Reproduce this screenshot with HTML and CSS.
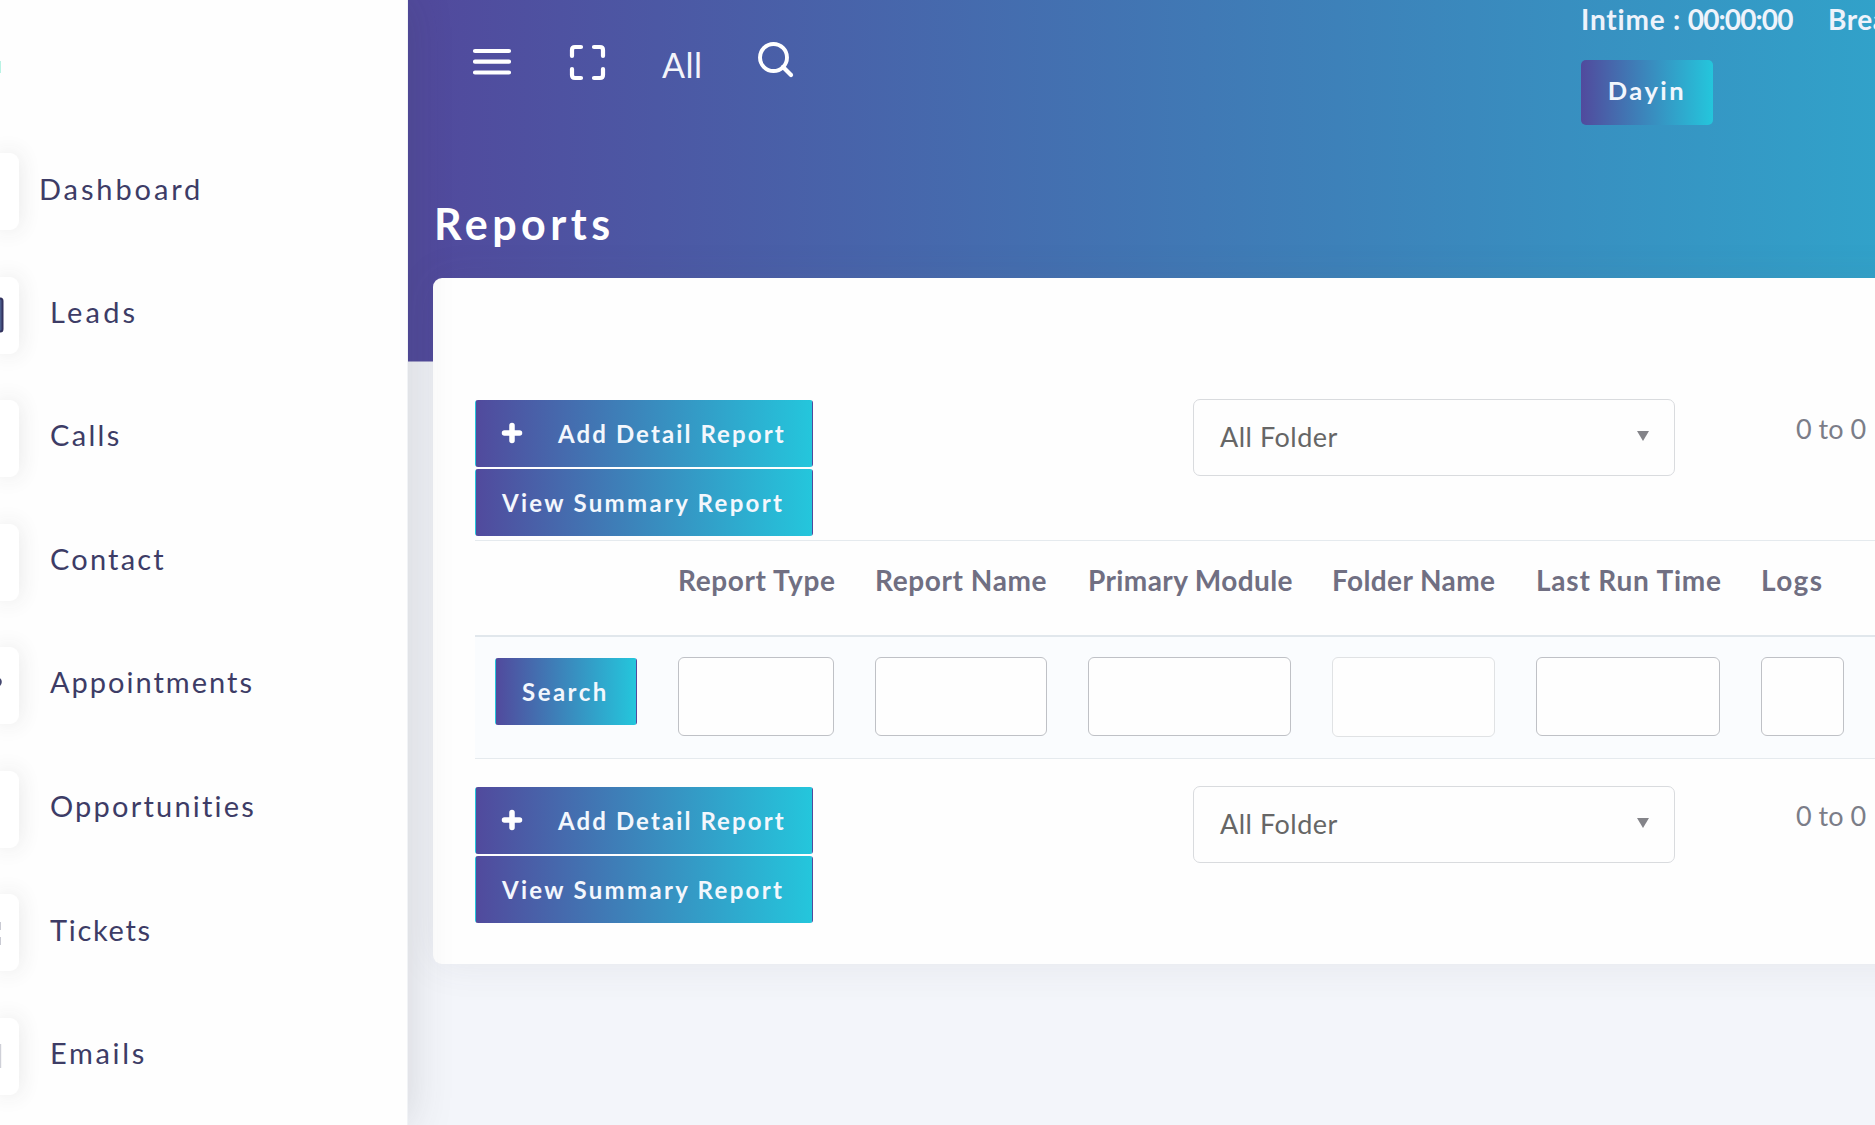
FILE: index.html
```html
<!DOCTYPE html>
<html lang="en">
<head>
<meta charset="utf-8">
<title>Reports</title>
<link rel="stylesheet" href="styles.css">
</head>
<body>
<div class="app">
  <aside class="sidebar">
    <div class="brand"><span class="brand-dot"></span></div>
    <nav class="nav">
      <a class="nav-item nav-item-home"><span class="nav-icon"></span><span class="nav-label t-dashboard">Dashboard</span></a>
      <a class="nav-item"><span class="nav-icon"><svg width="6" height="36" viewBox="0 0 6 36"><path d="M-6 1.5H.5Q2.5 1.5 2.5 4V32Q2.5 34.500 .5 34.500H-6Z" fill="#4b5c8c" stroke="#33335f" stroke-width="2"/></svg></span><span class="nav-label t-leads">Leads</span></a>
      <a class="nav-item"><span class="nav-icon"></span><span class="nav-label t-calls">Calls</span></a>
      <a class="nav-item"><span class="nav-icon"></span><span class="nav-label t-contact">Contact</span></a>
      <a class="nav-item"><span class="nav-icon"><svg width="6" height="18" viewBox="0 0 6 18"><circle cx="-3" cy="5" r="4.800" fill="#44476f"/></svg></span><span class="nav-label">Appointments</span></a>
      <a class="nav-item"><span class="nav-icon"></span><span class="nav-label t-contact">Opportunities</span></a>
      <a class="nav-item"><span class="nav-icon"><svg width="6" height="26" viewBox="0 0 6 26"><path d="M0 2H1V10H0M0 17H1V25H0" fill="#c9cad3"/></svg></span><span class="nav-label t-tickets">Tickets</span></a>
      <a class="nav-item"><span class="nav-icon"><svg width="6" height="26" viewBox="0 0 6 26"><path d="M0 1H1.200V25H0" fill="#cfd0d8"/></svg></span><span class="nav-label t-emails">Emails</span></a>
    </nav>
  </aside>
  <main class="main">
    <header class="topbar">
      <div class="tools">
        <svg class="icon-menu" width="38" height="28" viewBox="0 0 38 28"><path d="M2 3H36M2 13.700H36M2 24.500H36" stroke="#fff" stroke-width="4.200" stroke-linecap="round"/></svg>
        <svg class="icon-full" width="36" height="36" viewBox="0 0 36 36"><path d="M2 11V5Q2 2 5 2H11M24 2H30Q33 2 33 5V11M33 24V30Q33 33 30 33H24M11 33H5Q2 33 2 30V24" fill="none" stroke="#fff" stroke-width="4.200" stroke-linecap="round"/></svg>
        <span class="all">All</span>
        <svg class="icon-search" width="36" height="36" viewBox="0 0 36 36"><circle cx="15.500" cy="15.500" r="13.500" fill="none" stroke="#fff" stroke-width="3.900"/><path d="M25 25L33 33" stroke="#fff" stroke-width="4.200" stroke-linecap="round"/></svg>
      </div>
      <div class="clock">
        <div class="times"><span class="intime"><span class="t-in">Intime :</span> <span class="t-zero">00:00:00</span></span><span class="break">Break</span></div>
        <button class="dayin">Dayin</button>
      </div>
    </header>
    <h1 class="title">Reports</h1>
    <section class="card">
      <div class="actions">
        <div class="buttons">
          <button class="btn btn-wide"><svg width="20" height="20" viewBox="0 0 20 20"><path d="M10 2.500V17.500M2.500 10H17.500" stroke="#fff" stroke-width="5.500" stroke-linecap="round"/></svg><span class="t-add">Add Detail Report</span></button>
          <button class="btn btn-wide"><span class="t-view">View Summary Report</span></button>
        </div>
        <div class="select"><span>All Folder</span><i class="caret"></i></div>
        <div class="range">0 to 0</div>
      </div>
      <table class="reports">
        <colgroup><col class="c0"><col class="c1"><col class="c2"><col class="c3"><col class="c4"><col class="c5"><col class="c6"><col class="c7"></colgroup>
        <thead>
          <tr><th></th><th class="t-type">Report Type</th><th class="t-type">Report Name</th><th class="t-module">Primary Module</th><th class="t-module">Folder Name</th><th class="t-last">Last Run Time</th><th class="t-logs">Logs</th><th></th></tr>
        </thead>
        <tbody>
          <tr><td><button class="btn btn-search">Search</button></td><td><input class="field"></td><td><input class="field"></td><td><input class="field"></td><td><input class="field field-light"></td><td><input class="field"></td><td><input class="field"></td><td></td></tr>
        </tbody>
      </table>
      <div class="actions actions-bottom">
        <div class="buttons">
          <button class="btn btn-wide"><svg width="20" height="20" viewBox="0 0 20 20"><path d="M10 2.500V17.500M2.500 10H17.500" stroke="#fff" stroke-width="5.500" stroke-linecap="round"/></svg><span class="t-add">Add Detail Report</span></button>
          <button class="btn btn-wide"><span class="t-view">View Summary Report</span></button>
        </div>
        <div class="select"><span>All Folder</span><i class="caret"></i></div>
        <div class="range">0 to 0</div>
      </div>
    </section>
  </main>
</div>
</body>
</html>
```
FILE: styles.css
```css
* { box-sizing: border-box; }
body { margin: 0; width: 1875px; height: 1125px; overflow: hidden; background: #f3f5fa; font-family: Lato, "Liberation Sans", sans-serif; color: #706f82; }
button, input { font: inherit; margin: 0; }
svg { display: block; overflow: visible; flex: none; }
.app { display: flex; height: 1125px; }

.sidebar { flex: none; width: 408px; background: #fefefe; border-right: 1px solid #f1f3f6; box-shadow: 0 0 42px rgba(60, 60, 60, .18); z-index: 2; overflow: hidden; }
.brand { height: 153px; padding-top: 61px; }
.brand-dot { display: block; width: 1px; height: 12px; background: #b9f3e4; }
.nav { display: flex; flex-direction: column; gap: 46.500px; }
.nav-item { display: flex; align-items: flex-start; height: 77px; gap: 31px; }
.nav-item-home { gap: 20px; }
.nav-icon { width: 19px; height: 77px; display: flex; align-items: center; border-radius: 0 9px 9px 0; background: #fff; box-shadow: 0 0 22px rgba(60, 60, 60, .12); }
.nav-label { font-size: 29px; line-height: 70px; color: #3d3c66; letter-spacing: 2px; white-space: nowrap; }
.t-dashboard { letter-spacing: 2.900px; line-height: 72px; }
.t-leads { letter-spacing: 3.200px; }
.t-calls { letter-spacing: 2.300px; }
.t-contact { letter-spacing: 2.200px; }
.t-tickets { letter-spacing: 1.700px; line-height: 72px; }
.t-emails { letter-spacing: 2.650px; }

.main { flex: 1; min-width: 0; padding-left: 25px; overflow: hidden; background: linear-gradient(90deg, #514a9d 20px, #24c6dc 2070px) 0 0 / 2100px 361.500px no-repeat; }
.topbar { display: flex; justify-content: space-between; height: 180px; padding: 0 0 0 40px; }
.tools { display: flex; align-items: flex-start; }
.icon-menu { margin-top: 48px; }
.icon-full { margin: 45px 0 0 59px; }
.all { margin: 45px 0 0 56px; width: 43px; font-size: 34px; line-height: 40px; letter-spacing: .5px; color: #f3f4fa; white-space: nowrap; }
.icon-search { margin: 42px 0 0 53px; }
.clock { width: 294px; }
.times { display: flex; height: 60px; padding-top: 2px; font-size: 28px; font-weight: 700; line-height: 34px; color: #eef3fb; white-space: nowrap; }
.intime { flex: none; width: 247px; }
.t-in { letter-spacing: .8px; }
.t-zero { letter-spacing: -.9px; }
.break { letter-spacing: .5px; }
.dayin { display: block; width: 132px; height: 65px; padding: 0 0 6px; border: 0; border-radius: 5px; background: linear-gradient(90deg, #514a9d, #24c6dc); color: #f2f6fd; font-size: 25.500px; font-weight: 700; letter-spacing: 2.500px; }
.title { margin: 0 0 0 1px; height: 98px; font-size: 43px; font-weight: 700; line-height: 88px; letter-spacing: 4.500px; color: #fff; }

.card { width: 1700px; height: 686px; padding: 121px 0 0 42px; border-radius: 9px; background: #fefefe; box-shadow: 0 0 40px rgba(80, 80, 90, .09); }
.actions { display: flex; height: 141px; }
.buttons { display: flex; flex-direction: column; gap: 2px; width: 338px; padding-top: 1px; margin-right: 380px; }
.btn { display: flex; align-items: center; height: 67px; padding: 0 26px 1px; border: 1px solid transparent; border-radius: 3px; background: linear-gradient(90deg, #514a9d, #24c6dc); color: #f3f7fd; font-size: 24px; font-weight: 700; letter-spacing: 1.500px; white-space: nowrap; }
.btn-wide { width: 338px; }
.btn-wide svg { margin-right: 36px; }
.btn-search { width: 142px; letter-spacing: 2.500px; }
.t-add { letter-spacing: 2.100px; }
.t-view { letter-spacing: 2.300px; }
.select { display: flex; align-items: center; justify-content: space-between; width: 482px; height: 77px; padding: 0 25px 3px 26px; margin-right: 121px; border: 1px solid #d9dbde; border-radius: 7px; font-size: 27px; letter-spacing: .5px; color: #666; }
.caret { border: 6.500px solid transparent; border-top: 10px solid #848489; border-bottom: 0; }
.range { font-size: 27px; line-height: 60px; color: #7b7d88; white-space: nowrap; }

.reports { width: 1650px; table-layout: fixed; border-collapse: separate; border-spacing: 0; }
.c0 { width: 183px; }
.c1 { width: 197px; }
.c2 { width: 213px; }
.c3 { width: 244px; }
.c4 { width: 204px; }
.c5 { width: 225px; }
.c6 { width: 124px; }
.c7 { width: 260px; }
.reports th { height: 97px; padding: 0 0 0 20px; border-top: 1px solid #e5eaee; border-bottom: 2px solid #e1e7ec; text-align: left; vertical-align: top; font-size: 28px; font-weight: 700; line-height: 79px; white-space: nowrap; }
.reports .t-type { letter-spacing: .6px; }
.reports .t-module { letter-spacing: .4px; }
.reports .t-last { letter-spacing: .8px; }
.reports .t-logs { letter-spacing: 1.400px; }
.reports td { height: 122px; padding: 20px 21px 0 20px; vertical-align: top; border-bottom: 1px solid #e5eaee; background: #fafcfe; }
.reports td:first-child { padding-top: 21px; }
.field { display: block; width: 100%; height: 79px; border: 1px solid #bfc1c6; border-radius: 6px; background: #fefefe; }
.field-light { height: 80px; border-color: #e0e2e4; }
.actions-bottom { margin-top: 27px; }
```
